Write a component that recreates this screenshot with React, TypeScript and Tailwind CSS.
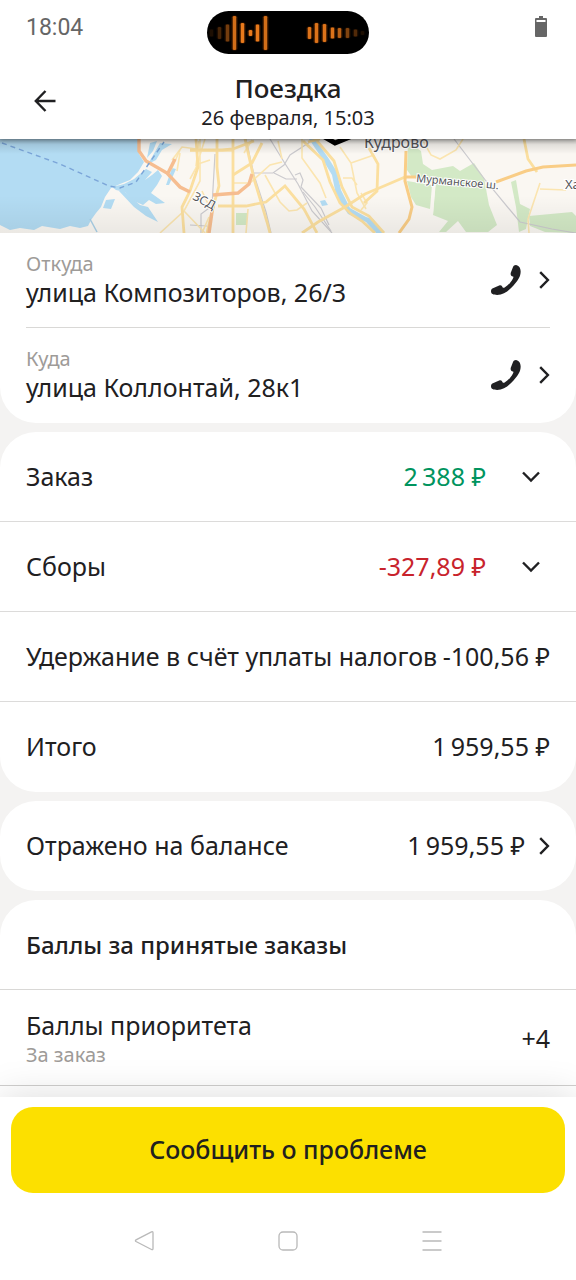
import type { ReactNode } from 'react';

const leftBars = [
  { x: 4, h: 7, o: 0.12 },
  { x: 12, h: 12, o: 0.3 },
  { x: 20, h: 17, o: 0.5 },
  { x: 27, h: 34, o: 0.9 },
  { x: 35, h: 20, o: 1 },
  { x: 43, h: 6, o: 1 },
  { x: 50, h: 17, o: 1 },
  { x: 58, h: 34, o: 0.9 },
];

const rightBars = [
  { x: 102, h: 12, o: 0.95 },
  { x: 109, h: 20, o: 0.95 },
  { x: 117, h: 18, o: 0.95 },
  { x: 125, h: 11, o: 0.95 },
  { x: 132, h: 10, o: 0.8 },
  { x: 140, h: 10, o: 0.55 },
  { x: 148, h: 7, o: 0.35 },
  { x: 155, h: 4, o: 0.12 },
];

function Island() {
  return (
    <svg width="162" height="44" viewBox="0 0 162 44" aria-hidden="true">
      <rect width="162" height="43" rx="21.5" fill="#000" />
      {[...leftBars, ...rightBars].map((bar) => (
        <g key={bar.x} opacity={bar.o}>
          <rect x={bar.x - 2.5} y={21.5 - bar.h / 2} width="6" height={bar.h + 1} rx="2" fill="#7a3400" opacity="0.5" />
          <rect x={bar.x - 1.2} y={22 - bar.h / 2} width="3.4" height={bar.h} rx="1.2" fill="#e87a1c" />
        </g>
      ))}
    </svg>
  );
}

function Phone() {
  return (
    <svg width="30" height="30" viewBox="0 0 88 88" fill="#202022" aria-hidden="true">
      <path d="M73 0C81 1 87 8 87 19C87 33 80 45 66 60C52 76 37 88 18 88C7 88 0 85 0 78C0 74 1 71 4 69L24 60C29 58 32 60 34 65C35 67 38 67 41 65C50 60 59 50 64 40C67 35 66 34 62 33C58 31 57 28 58 23L64 7C66 2 69 0 73 0Z" />
    </svg>
  );
}

function ChevronRight() {
  return (
    <svg width="12" height="18" viewBox="0 0 12 18" fill="none" stroke="#202022" strokeWidth="2.4" aria-hidden="true">
      <path d="M2.200 1.200L9.900 9L2.200 16.800" />
    </svg>
  );
}

function ChevronDown() {
  return (
    <svg width="18" height="12" viewBox="0 0 18 12" fill="none" stroke="#202022" strokeWidth="2.4" aria-hidden="true">
      <path d="M1 1.500L9 9.500L17 1.500" />
    </svg>
  );
}

function TripMap() {
  return (
    <svg
      className="block h-[94px] w-full shrink-0"
      viewBox="0 0 576 94"
      preserveAspectRatio="xMidYMid slice"
      fill="none"
      role="img"
      aria-label="Карта поездки"
    >
      <defs>
        <linearGradient id="map-shade" x1="0" y1="0" x2="0" y2="1">
          <stop offset="0" stopColor="#000" stopOpacity="0.28" />
          <stop offset="0.06" stopColor="#000" stopOpacity="0.1" />
          <stop offset="0.16" stopColor="#000" stopOpacity="0" />
          <stop offset="0.6" stopColor="#000" stopOpacity="0" />
          <stop offset="1" stopColor="#000" stopOpacity="0.06" />
        </linearGradient>
      </defs>
      <rect width="576" height="94" fill="#faf7f2" />

      {/* water */}
      <g fill="#b3dcf3">
        <path d="M0 0H138L139 15L144 23L138 33L130 41L120 45L111 49L105 58L101 68L96 74L91 81L88 87L80 89L70 87L60 90L42 87L34 91L20 89L10 91L0 86Z" />
        <path d="M112 48L124 45L134 40L146 30L152 33L145 41L152 36L158 31L162 37L157 46L151 54L158 59L165 64L156 65L149 61L143 66L134 62L125 53L116 51Z" />
        <path d="M106 61L115 60L111 70L103 69Z" />
        <path d="M124 52L140 66L148 68L158 83L146 77L134 68L119 52Z" />
        <path d="M150 4L157 2L153 12L147 19ZM160 4L172 5L162 11L156 21L148 25ZM172 29L176 30L169 46L166 46Z" />
        <path d="M309 0H315L329 20L337 33L341 51L350 69L366 78L373 80L383 94H376L366 83L348 75L336 56L332 36L323 21Z" />
        <path d="M320 62L325 61L328 66L322 67Z" />
      </g>
      <path d="M90 80L97 93" stroke="#a9cfe6" strokeWidth="1.5" />

      {/* parks */}
      <g fill="#d3e9c6">
        <path d="M408 3L421 12L423 25L432 31L453 27L460 32L474 24L484 39L489 66L497 86L488 93H466L458 82L446 93H439L448 82L433 76L435 49L437 42L428 44L412 38L407 31Z" />
        <path d="M407 42L432 46L430 70L416 66L411 58Z" />
        <path d="M511 43L516 41L520 65L530 70L526 90L519 93L516 68Z" />
        <path d="M529 77L572 73L576 77V94L545 93L530 87Z" />
        <path d="M236 74H247V86H236Z" />
      </g>
      <path d="M435 42L432 76" stroke="#faf7f2" strokeWidth="2" />

      {/* railways */}
      <g stroke="#cbcace" strokeWidth="1.2">
        <path d="M246 0L254 36L266 73L271 94" />
        <path d="M270 0L284 23L298 45L312 72L332 94" />
        <path d="M310 3L290 16L284 26L273 34H254" />
        <path d="M274 34L286 40H297M295 36L300 34L303 41L301 48L321 69L329 86" />
        <path d="M215 15L212 67L201 75V94M190 86L207 87M303 53L315 68L331 92" />
        <path d="M454 0L486 42L520 83L552 90L576 94" />
      </g>

      {/* side streets */}
      <g stroke="#fbe5b0" strokeWidth="1.6">
        <path d="M200 0V42L184 72L160 94M184 72L205 94M205 0L196 29L190 40M180 11L171 31M172 21L182 8L197 10" />
        <path d="M190 12H232M199 2L196 27M177 32L180 14M198 25L210 21M252 1L244 14M202 52L210 69" />
        <path d="M232 44H250L270 26L282 23M265 36L280 63L289 72L297 71L307 64" />
        <path d="M302 0V19L320 44L326 59M248 70L246 94M278 2L282 20M209 78L202 94" />
        <path d="M340 8L351 24L357 54L366 70M351 24L374 16M343 39H352L357 46" />
        <path d="M361 54L367 64L361 71M422 0L431 16L440 20L456 11L463 0M540 50L566 51M540 44L528 80L529 94" />
      </g>

      {/* main roads */}
      <g stroke="#fbdf9f" strokeWidth="2.8">
        <path d="M196 0L198 28L190 52L182 68L184 94" />
        <path d="M217 0L217 28L219 47L212 72L207 94M233 0V94M190 11H222L233 10" />
        <path d="M233 10L254 2M233 36L252 24L262 4M245 0L254 40L267 83L270 94" />
        <path d="M218 67H246L266 63L285 47L304 70L317 94" />
        <path d="M302 94L318 83L345 68L365 55L384 47L405 38" />
        <path d="M303 2L323 21L330 43L340 64L351 75L362 82L375 94" />
        <path d="M317 2L334 22L342 48L352 68L369 77L384 94M308 3L320 0" />
        <path d="M369 9L378 25L377 52L364 64" />
        <path d="M524 0L528 20L537 33" />
      </g>
      <g stroke="#f9cd86" strokeWidth="3">
        <path d="M406 12L405 42L412 68L409 80L399 94M406 38H416M496 43L526 32L543 28L576 26" />
      </g>
      <g stroke="#f6bd90" strokeWidth="3.4">
        <path d="M139 0V12L146 22L167 34L180 48L190 53M213 56L238 54L249 45L252 35M213 66L209 94M168 34L175 20" />
      </g>

      {/* ferry line */}
      <path d="M2 4L60 25L109 47L120 49L136 43L150 23L164 3" stroke="#7ba5d8" strokeWidth="1.4" strokeDasharray="5 4" />

      <path d="M323 -3L335 4L352 -3" stroke="#000" strokeWidth="5" />
      <g fill="#55565a" stroke="#fff" strokeWidth="2" paintOrder="stroke" fontFamily="'Noto Sans', sans-serif">
        <text x="364" y="9" fontSize="16">Кудрово</text>
        <text x="192" y="60" fontSize="12" transform="rotate(28 192 60)">ЗСД</text>
        <text x="416" y="43" fontSize="11" transform="rotate(5 416 43)">Мурманское ш.</text>
        <text x="565" y="50" fontSize="13">Ха</text>
        <text x="-5" y="102" fontSize="13">льно</text>
      </g>
      <rect width="576" height="94" fill="url(#map-shade)" />
    </svg>
  );
}

function Address({ label, street }: { label: string; street: string }) {
  return (
    <div className="flex h-[95px] items-center pb-px">
      <a href="#address" className="min-w-0 flex-1">
        <p className="text-[20px] leading-6 text-[#9e9b98]">{label}</p>
        <p className="text-[25px] leading-8">{street}</p>
      </a>
      <button type="button" aria-label={`Позвонить: ${street}`} className="mr-[17px]">
        <Phone />
      </button>
      <ChevronRight />
    </div>
  );
}

function Row({ label, children }: { label: string; children: ReactNode }) {
  return (
    <div className="flex h-[90px] items-center justify-between px-[26px] text-[25px]">
      <span>{label}</span>
      {children}
    </div>
  );
}

function ExpandableRow({ label, amount, tone }: { label: string; amount: string; tone: string }) {
  return (
    <button
      type="button"
      aria-expanded="false"
      className="flex h-[90px] w-full items-center px-[26px] text-left text-[25px]"
    >
      <span className="flex-1">{label}</span>
      <span className={tone}>{amount}</span>
      <span className="mr-[10px] ml-9">
        <ChevronDown />
      </span>
    </button>
  );
}

export default function App() {
  return (
    <div className="flex h-screen flex-col bg-[#f4f3f2] font-['Noto_Sans',sans-serif] text-[#21201f]">
      <header className="relative z-10 bg-white shadow-[0_1px_4px_rgba(0,0,0,0.3)]">
        <div className="grid h-[66px] grid-cols-[1fr_auto_1fr] items-center px-[26px]">
          <span className="pb-[10px] font-['Roboto',sans-serif] text-[23px] text-[#666]">18:04</span>
          <Island />
          <svg className="mr-[3px] mb-[14px] justify-self-end" width="12" height="21" viewBox="0 0 12 21" aria-hidden="true">
            <path d="M4 0H8V2H11Q12 2 12 3V20Q12 21 11 21H1Q0 21 0 20V3Q0 2 1 2H4Z" fill="#666" />
            <rect x="1.500" y="4" width="9" height="2" fill="#fff" />
          </svg>
        </div>
        <div className="grid h-[73px] grid-cols-[1fr_auto_1fr] items-start px-[26px]">
          <button type="button" aria-label="Назад" className="mt-6 ml-2 justify-self-start">
            <svg width="22" height="22" viewBox="0 0 22 22" fill="none" stroke="#202022" strokeWidth="2.4" aria-hidden="true">
              <path d="M21.500 11H2M11.500 1L1.800 11L11.500 21" />
            </svg>
          </button>
          <div className="pt-2 text-center">
            <h1 className="text-[26px] leading-7 font-medium">Поездка</h1>
            <p className="text-[20px] leading-8">26 февраля, 15:03</p>
          </div>
        </div>
      </header>

      <main className="flex min-h-0 flex-1 flex-col overflow-y-auto [scrollbar-width:none]">
        <TripMap />
        <div className="flex flex-1 flex-col gap-[9px]">
          <section className="divide-y divide-[#d9d8d6] rounded-b-[36px] bg-white px-[26px]">
            <Address label="Откуда" street="улица Композиторов, 26/3" />
            <Address label="Куда" street="улица Коллонтай, 28к1" />
          </section>

          <section className="divide-y divide-[#dcdbda] rounded-[36px] bg-white">
            <ExpandableRow label="Заказ" amount={'2\u2009388 ₽'} tone="text-[#00945e]" />
            <ExpandableRow label="Сборы" amount="-327,89 ₽" tone="text-[#c8232c]" />
            <Row label="Удержание в счёт уплаты налогов">
              <span>-100,56 ₽</span>
            </Row>
            <Row label="Итого">
              <span>{'1\u2009959,55 ₽'}</span>
            </Row>
          </section>

          <section className="rounded-[36px] bg-white">
            <a href="#balance" className="block">
              <Row label="Отражено на балансе">
                <span className="flex items-center gap-[13px]">
                  {'1\u2009959,55 ₽'}
                  <ChevronRight />
                </span>
              </Row>
            </a>
          </section>

          <section className="flex-1 divide-y divide-[#d9d8d6] rounded-t-[36px] bg-white">
            <h2 className="flex h-[90px] items-center px-[26px] text-[24px] font-medium">Баллы за принятые заказы</h2>
            <div className="flex h-24 items-center justify-between border-b border-[#d0cfce] px-[26px] pt-[2px] text-[25px]">
              <div>
                <p className="leading-8">Баллы приоритета</p>
                <p className="text-[20px] leading-7 text-[#9e9b98]">За заказ</p>
              </div>
              <span>+4</span>
            </div>
          </section>
        </div>
      </main>

      <footer className="relative z-10 bg-white px-[11px] pt-[10px] shadow-[0_-2px_36px_rgba(0,0,0,0.13)]">
        <button type="button" className="h-[86px] w-full rounded-[22px] bg-[#fce000] text-[25px] font-medium">
          Сообщить о проблеме
        </button>
        <nav className="flex h-[87px] items-center justify-center gap-[114px] pt-2" aria-label="Системная навигация">
          <button type="button" aria-label="Назад">
            <svg width="30" height="22" viewBox="0 0 30 22" fill="none" stroke="#b9b9b9" strokeWidth="1.3" aria-hidden="true">
              <path d="M22.500 1.800Q24 1.200 24 2.800V18.600Q24 20.200 22.500 19.500L7 11.500Q5.800 10.700 7 9.900Z" />
            </svg>
          </button>
          <button type="button" aria-label="Домой">
            <svg width="30" height="22" viewBox="0 0 30 22" fill="none" stroke="#b9b9b9" strokeWidth="1.3" aria-hidden="true">
              <rect x="6" y="2" width="18" height="18" rx="4" />
            </svg>
          </button>
          <button type="button" aria-label="Недавние приложения">
            <svg width="30" height="22" viewBox="0 0 30 22" fill="none" stroke="#b9b9b9" strokeWidth="1.5" aria-hidden="true">
              <path d="M5.500 2H24.500M5.500 11H24.500M5.500 20H24.500" />
            </svg>
          </button>
        </nav>
      </footer>
    </div>
  );
}
